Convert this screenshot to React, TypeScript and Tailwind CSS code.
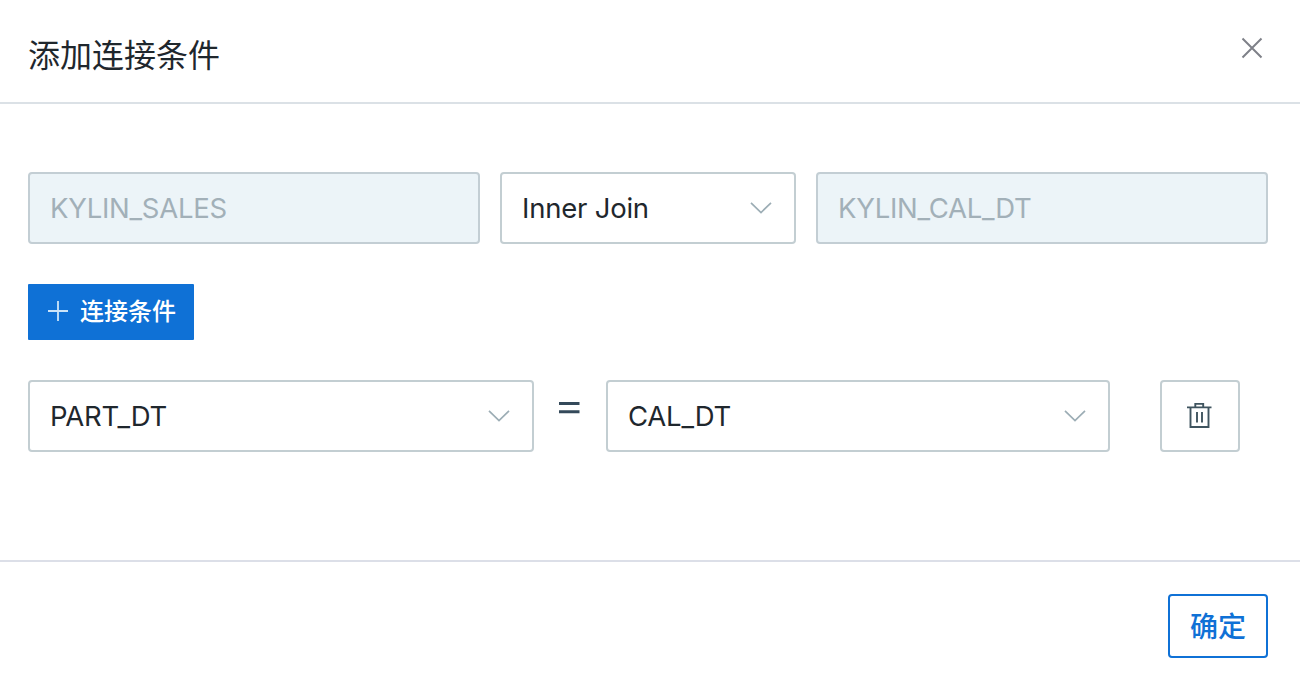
import { ReactNode } from "react";

function Chevron() {
  return (
    <svg width="22" height="14" viewBox="0 0 22 14" fill="none" stroke="#9cadb5" strokeWidth="1.7" className="shrink-0">
      <path d="M1 1.8 11 11.5 21 1.8" />
    </svg>
  );
}

function Select({ children, className }: { children: ReactNode; className: string }) {
  return (
    <button className={`flex h-[72px] items-center justify-between rounded-[4px] border-2 border-[#c3ced2] bg-white pl-5 pr-[22px] text-[27.5px] tracking-[-0.22px] text-[#1f272d] ${className}`}>
      <span className="pt-px">{children}</span>
      <Chevron />
    </button>
  );
}

function TableName({ children }: { children: ReactNode }) {
  return (
    <div className="flex h-[72px] w-[452px] items-center rounded-[4px] border-2 border-[#c3ced4] bg-[#ecf4f8] pl-5 text-[27.5px] tracking-[-0.25px] text-[#a2b0b8]">
      <span className="pt-px">{children}</span>
    </div>
  );
}

export default function App() {
  return (
    <div className="flex h-[674px] w-[1300px] flex-col overflow-hidden bg-white font-['Inter','Noto_Sans_CJK_SC',sans-serif] text-[#1f272d]">
      <header className="flex h-[104px] items-center justify-between border-b-2 border-[#dbe1e6] pl-7 pr-[37px]">
        <h1 className="mt-[9px] text-[32px] leading-[48px]">添加连接条件</h1>
        <button aria-label="关闭" className="-mt-[6px]">
          <svg width="22" height="22" viewBox="0 0 22 22" fill="none" stroke="#7e8088" strokeWidth="2">
            <path d="M1.5 1.5 20.5 20.5M20.5 1.5 1.5 20.5" />
          </svg>
        </button>
      </header>
      <main className="flex h-[458px] flex-col items-start border-b-2 border-[#dcdfe8] px-7 pt-[68px]">
        <div className="flex gap-5">
          <TableName>KYLIN_SALES</TableName>
          <Select className="w-[296px]">Inner Join</Select>
          <TableName>KYLIN_CAL_DT</TableName>
        </div>
        <button className="mt-10 flex h-14 w-[166px] items-center gap-3 rounded-[1px] bg-[#0f71d6] pl-5 text-[24px] text-white">
          <svg width="20" height="20" viewBox="0 0 20 20" fill="none" stroke="#cce4f9" strokeWidth="1.8" className="-mt-[2px]">
            <path d="M10 0V20M0 10H20" />
          </svg>
          <span className="font-medium">连接条件</span>
        </button>
        <div className="mt-10 flex">
          <Select className="w-[506px]">PART_DT</Select>
          <div className="flex w-[72px] justify-center pr-[2px] pt-[21px]">
            <svg width="22" height="14" viewBox="0 0 22 14" fill="#34495a">
              <path d="M1 1H21.5V4H1zM1 9.2H21.5V12.2H1z" />
            </svg>
          </div>
          <Select className="w-[504px]">CAL_DT</Select>
          <button aria-label="删除" className="ml-[50px] flex h-[72px] w-20 items-center justify-center rounded-[4px] border-2 border-[#c3ced2] pb-[2px] pr-[2px]">
            <svg width="26" height="26" viewBox="0 0 26 26" fill="none" stroke="#3f545f" strokeWidth="1.9">
              <path d="M1 5.4H25.5M4.5 5.4V25H22.5V5.4M9.3 5.4V1.9H17.2V5.4M11 10V20.5M16 10V20.5" />
            </svg>
          </button>
        </div>
      </main>
      <footer className="flex justify-end pr-8 pt-8">
        <button className="h-16 w-[100px] rounded-[4px] border-2 border-[#0f71d6] pt-[2px] text-[28px] font-medium text-[#0f71d6]">确定</button>
      </footer>
    </div>
  );
}
